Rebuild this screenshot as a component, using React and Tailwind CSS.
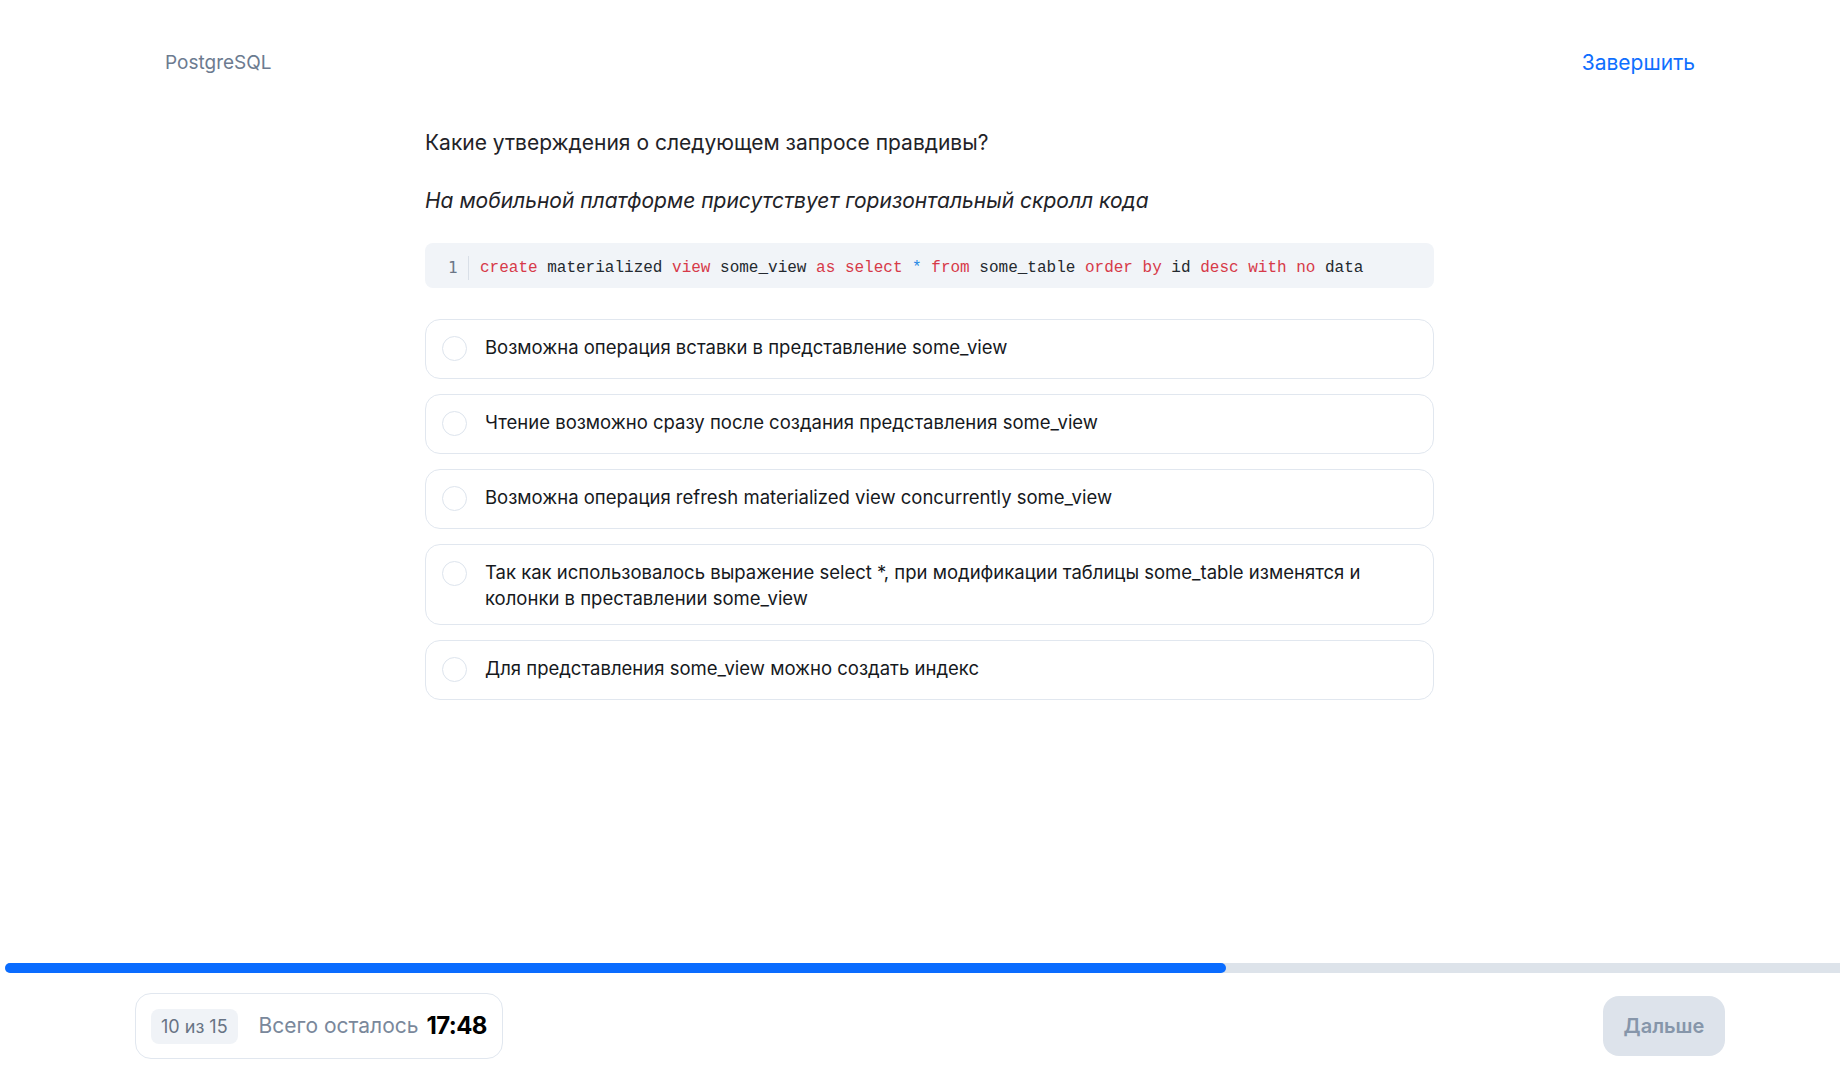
import React from "react";

const options = [
  "Возможна операция вставки в представление some_view",
  "Чтение возможно сразу после создания представления some_view",
  "Возможна операция refresh materialized view concurrently some_view",
  "Так как использовалось выражение select *, при модификации таблицы some_table изменятся и колонки в преставлении some_view",
  "Для представления some_view можно создать индекс",
];

// tokens of the single code line: [text, kind]
const code = [
  ["create", "kw"], [" materialized ", "id"], ["view", "kw"], [" some_view ", "id"],
  ["as", "kw"], [" ", "id"], ["select", "kw"], [" ", "id"], ["*", "op"], [" ", "id"],
  ["from", "kw"], [" some_table ", "id"], ["order", "kw"], [" ", "id"], ["by", "kw"],
  [" id ", "id"], ["desc", "kw"], [" ", "id"], ["with", "kw"], [" ", "id"], ["no", "kw"],
  [" data", "id"],
];

const tokenClass = {
  kw: "text-[#d73a49]",
  id: "text-[#24292f]",
  op: "text-[#1f88e5]",
};

const App = () => {
  return (
    <div className="min-h-screen flex flex-col bg-white font-['Inter','Noto_Sans',sans-serif]">
      {/* Header */}
      <header className="flex justify-between items-center pl-[165px] pr-[145px] pt-[49px]">
        <span className="text-[19px] leading-[28px] text-[#6c7b90]">PostgreSQL</span>
        <button className="text-[21px] leading-[28px] text-[#0f6fff]">Завершить</button>
      </header>

      {/* Question */}
      <main className="ml-[425px] w-[1009px] mt-[52px]">
        <h1 className="text-[21px] leading-[28px] text-[#1f2328]">
          Какие утверждения о следующем запросе правдивы?
        </h1>
        <p className="mt-[30px] text-[21px] leading-[28px] italic text-[#1f2328]">
          На мобильной платформе присутствует горизонтальный скролл кода
        </p>

        <div className="mt-[28px] h-[45px] flex items-center rounded-lg bg-[#f1f4f8] pl-[23px] pt-[4px] font-['DejaVu_Sans_Mono',monospace] text-[16px] whitespace-pre">
          <span className="text-[#6b7686] w-[10px]">1</span>
          <span className="ml-[10px] h-[24px] border-l border-[#d9dfe7]"></span>
          <code className="pl-[11px]">
            {code.map(([t, k], i) => (
              <span key={i} className={tokenClass[k]}>{t}</span>
            ))}
          </code>
        </div>

        <div className="mt-[31px] flex flex-col gap-[15px]">
          {options.map((o) => (
            <label
              key={o}
              className="flex items-start gap-[18px] rounded-[15px] border border-[#e1e7ef] bg-white pl-[16px] pr-[40px] py-[13px] cursor-pointer"
            >
              <span className="shrink-0 mt-[3px] mb-[4px] w-[25px] h-[25px] rounded-full border-[1.5px] border-[#dde4ed]"></span>
              <span className="pt-[1px] text-[18.5px] leading-[26px] text-[#16191d]">{o}</span>
            </label>
          ))}
        </div>
      </main>

      {/* Footer */}
      <div className="mt-auto">
        <div className="ml-[5px] h-[10px] bg-[#dde3ea] rounded-l-full">
          <div className="h-full w-[1221px] rounded-full bg-[#0a6cff]"></div>
        </div>
        <div className="flex justify-between items-center pl-[135px] pr-[115px] pt-[20px] pb-[21px]">
          <div className="h-[66px] flex items-center rounded-2xl border border-[#e1e7ef] px-[15px]">
            <span className="h-[35px] flex items-center rounded-lg bg-[#f0f3f7] px-[10px] text-[18px] text-[#677384]">
              10 из 15
            </span>
            <span className="ml-[21px] text-[21px] text-[#7a889b]">Всего осталось</span>
            <span className="ml-[8px] text-[24px] font-bold tracking-tight text-black">17:48</span>
          </div>
          <button className="w-[122px] h-[60px] rounded-2xl bg-[#dde3eb] text-[20px] font-semibold text-[#8696aa]">
            Дальше
          </button>
        </div>
      </div>
    </div>
  );
};

export default App;
